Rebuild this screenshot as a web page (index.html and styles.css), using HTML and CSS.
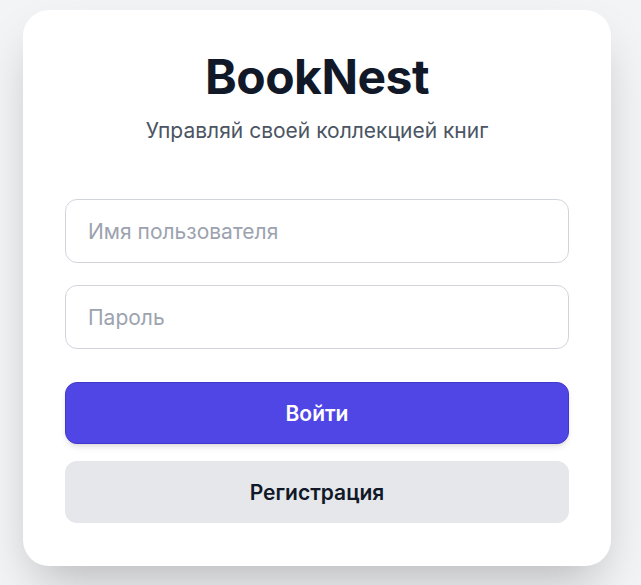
FILE: index.html
```html
<!DOCTYPE html>
<html lang="ru">
<head>
<meta charset="utf-8">
<title>BookNest</title>
<link rel="stylesheet" href="styles.css">
</head>
<body>
<main class="page">
  <section class="card">
    <h1 class="title">BookNest</h1>
    <p class="subtitle">Управляй своей коллекцией книг</p>
    <form class="form">
      <input class="field" type="text" placeholder="Имя пользователя">
      <input class="field" type="password" placeholder="Пароль">
      <button class="btn btn-primary" type="button">Войти</button>
      <button class="btn btn-secondary" type="button">Регистрация</button>
    </form>
  </section>
</main>
</body>
</html>
```
FILE: styles.css
```css
* { box-sizing: border-box; }
html, body { margin: 0; height: 100%; }
body {
  background: #f3f4f6;
  font-family: Inter, "Noto Sans", sans-serif;
}
.page {
  padding: 10px 30px 0 23px;
}
.card {
  width: 588px;
  height: 556px;
  background: #fff;
  border-radius: 26px;
  padding: 43px 42px 42px;
  box-shadow: 0 25px 50px -12px rgba(0,0,0,0.25);
}
.title {
  margin: 0;
  text-align: center;
  font-size: 48px;
  line-height: 1;
  font-weight: 700;
  color: #111827;
  letter-spacing: -0.5px;
}
.subtitle {
  margin: 16px 0 0;
  text-align: center;
  font-size: 21px;
  line-height: 28px;
  color: #4b5563;
}
.form {
  display: flex;
  flex-direction: column;
  margin-top: 54px;
}
.field {
  height: 64px;
  border: 1px solid #d1d5db;
  border-radius: 12px;
  padding: 0 22px;
  font-family: inherit;
  font-size: 21px;
  color: #111827;
  background: #fff;
  outline: none;
}
.field + .field { margin-top: 22px; }
.field::placeholder { color: #9ca3af; }
.btn {
  height: 62px;
  border-radius: 12px;
  font-family: inherit;
  font-size: 21px;
  font-weight: 600;
  cursor: pointer;
}
.btn-primary {
  margin-top: 33px;
  background: #4f46e5;
  color: #fff;
  border: 1px solid #4338ca;
  box-shadow: 0 4px 6px -1px rgba(0,0,0,0.1), 0 2px 4px -2px rgba(0,0,0,0.1);
}
.btn-secondary {
  margin-top: 17px;
  background: #e5e7eb;
  color: #111827;
  border: none;
}
```
